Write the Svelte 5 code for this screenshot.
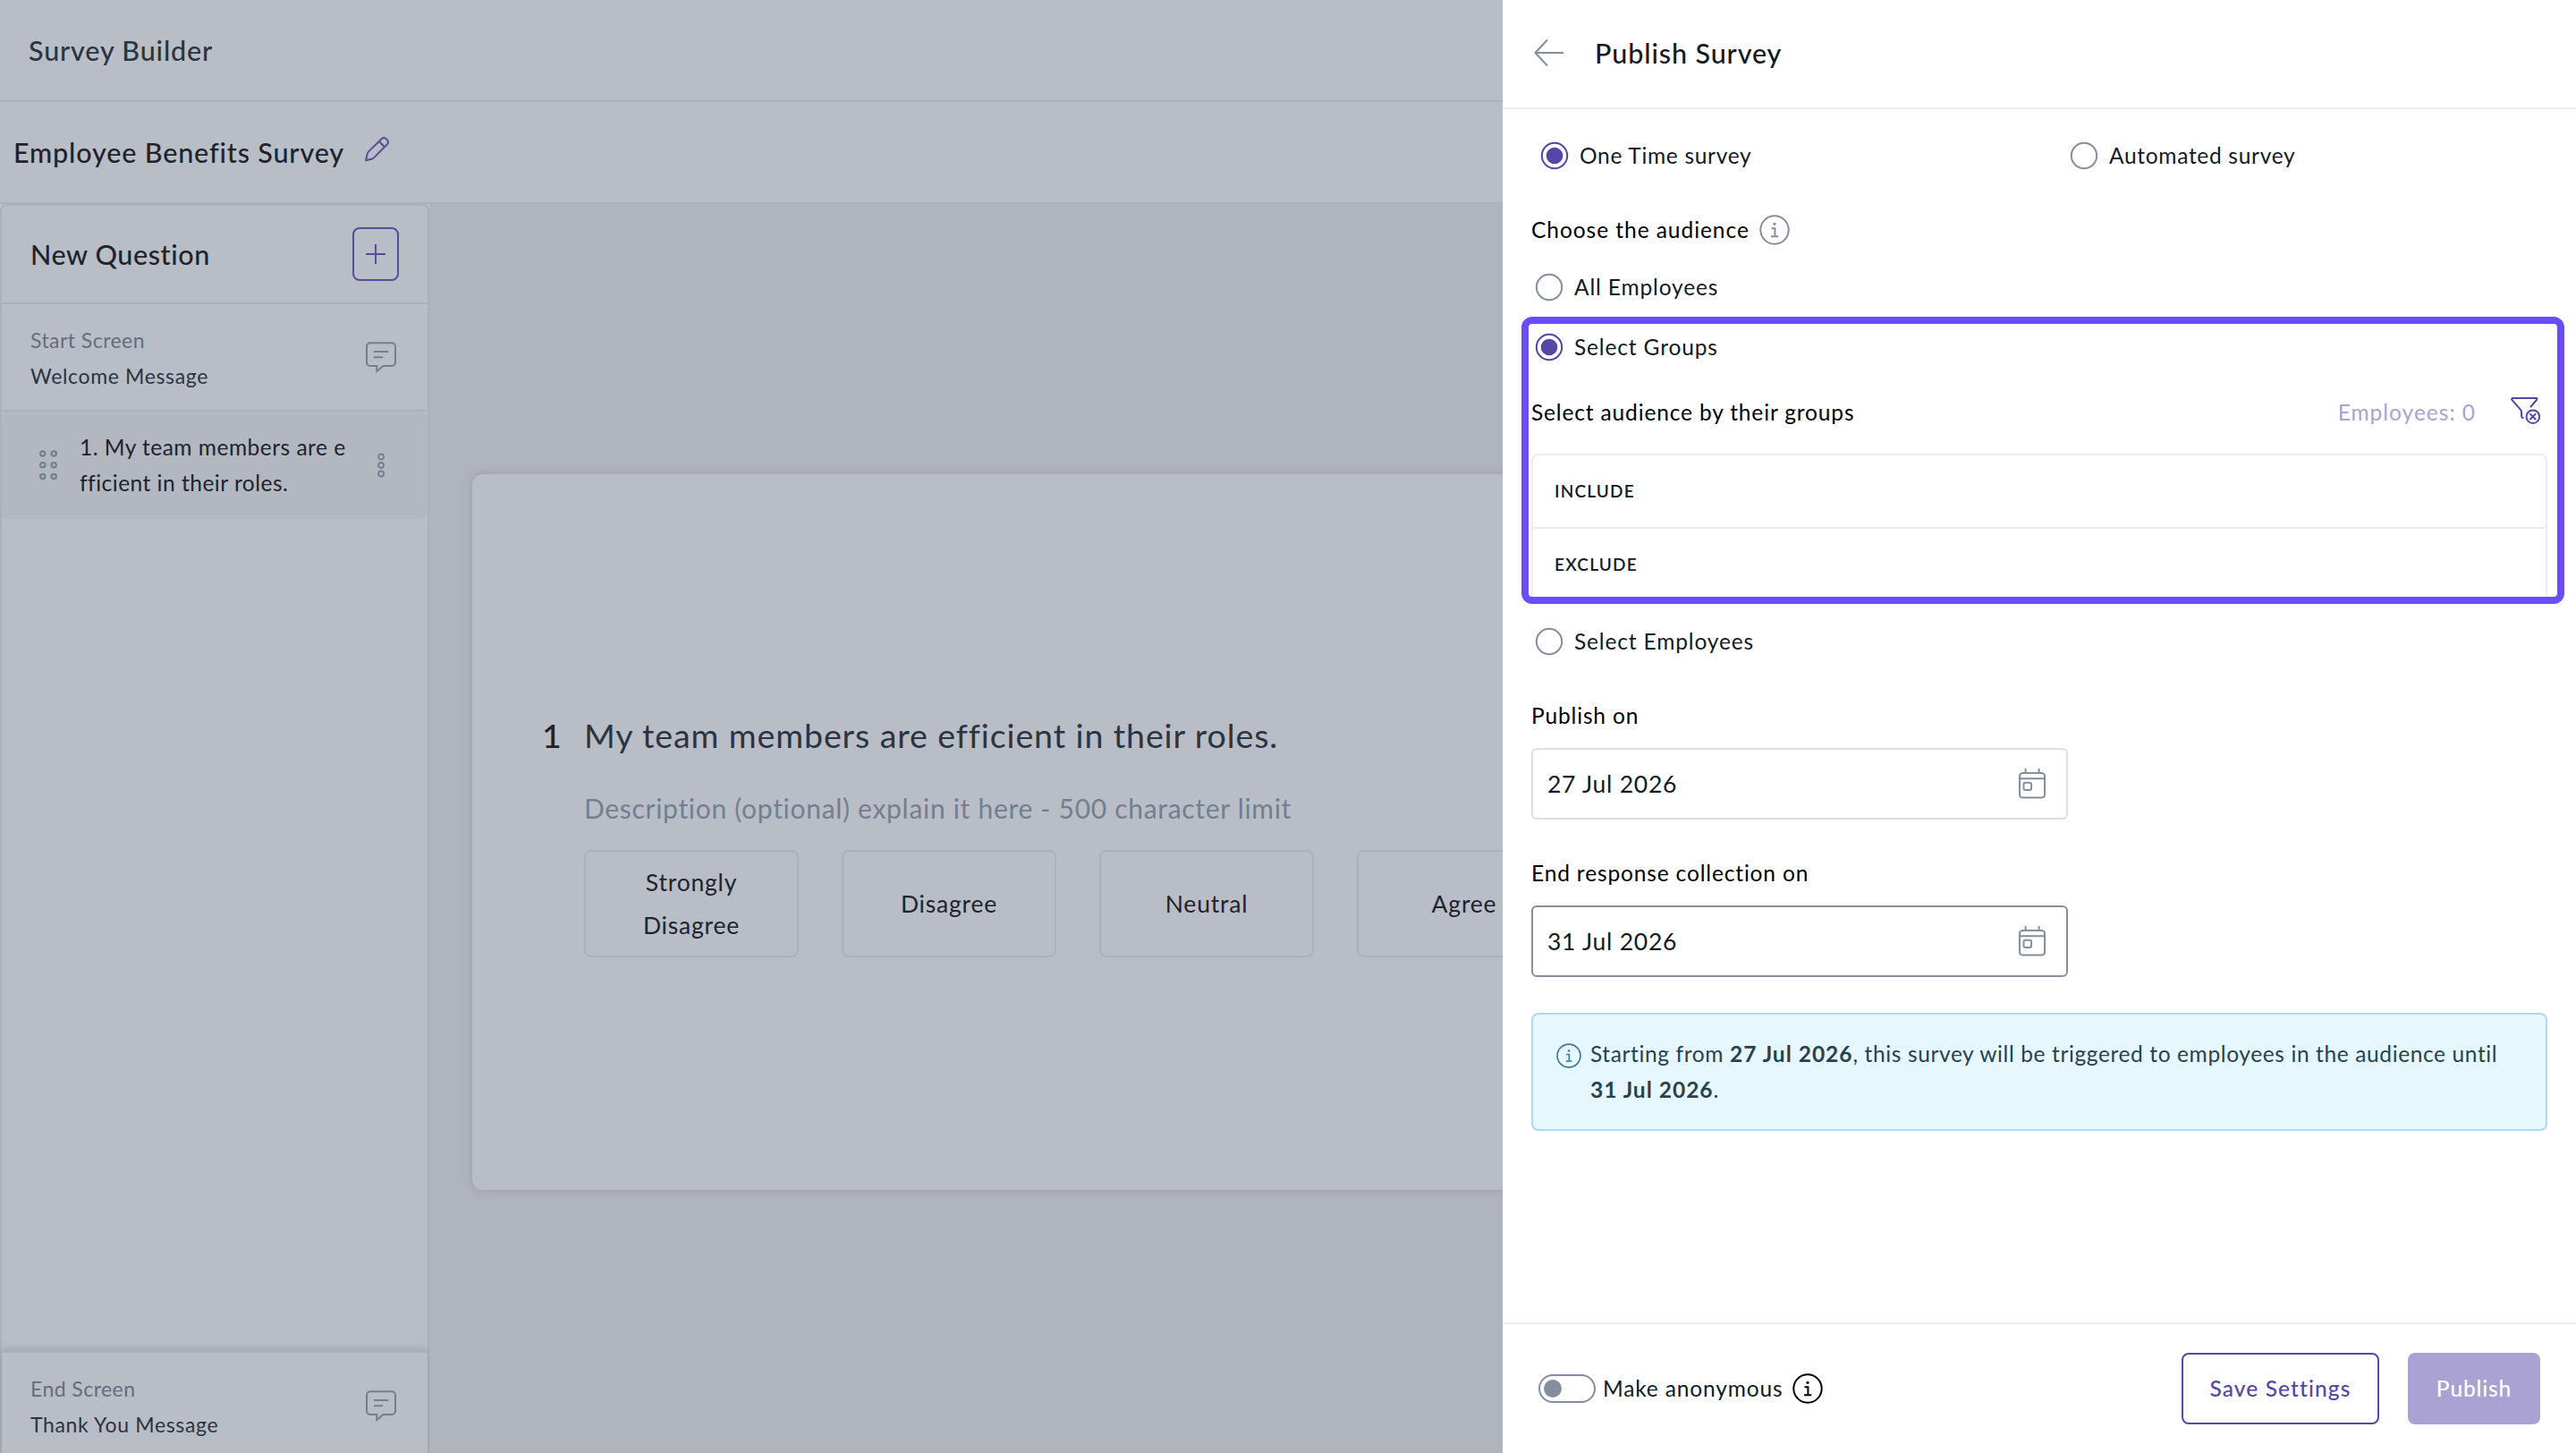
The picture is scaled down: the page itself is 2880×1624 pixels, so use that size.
<script>
	let surveyType = $state('one-time');
	let audience = $state('groups');
	let anonymous = $state(false);
	let publishOn = $state('27 Jul 2026');
	let endOn = $state('31 Jul 2026');

	const options = ['Strongly Disagree', 'Disagree', 'Neutral', 'Agree'];
	const dots = [4, 16.7, 29.5];
</script>

<svelte:head>
	<title>Survey Builder</title>
</svelte:head>

{#snippet radio(selected)}
	<svg class="radio" class:selected width="32" height="32" viewBox="0 0 32 32">
		<circle cx="16" cy="16" r="14.2" fill="none" stroke="currentColor" stroke-width="2" />
		{#if selected}
			<circle cx="16" cy="16" r="9.3" fill="currentColor" />
		{/if}
	</svg>
{/snippet}

{#snippet infoIcon(size)}
	<svg width={size} height={size} viewBox="0 0 34 34" fill="none" stroke="currentColor" stroke-width="2">
		<circle cx="17" cy="17" r="15.7" />
		<path d="M13.5 15.2H17.4V24.2M13 24.3H21.2" />
		<circle cx="17" cy="10.3" r="1.6" fill="currentColor" stroke="none" />
	</svg>
{/snippet}

{#snippet messageIcon()}
	<svg class="muted" width="34" height="35" viewBox="0 0 34 35" fill="none" stroke="currentColor" stroke-width="2" stroke-linecap="round">
		<path d="M5 1.2H29a4 4 0 0 1 4 4V23a4 4 0 0 1-4 4H19.5L12.3 33V27H5a4 4 0 0 1-4-4V5.2a4 4 0 0 1 4-4Z" />
		<path d="M9.7 10.9H24.3M9.7 17.2H18.3" />
	</svg>
{/snippet}

{#snippet calendarIcon()}
	<svg class="calendar" width="30" height="34" viewBox="0 0 30 34" fill="none" stroke="currentColor" stroke-width="2">
		<rect x="1" y="5" width="28" height="27.6" rx="3.5" />
		<path d="M1 11.3H29M7.6 0V5M22.6 0V5" />
		<rect x="5.5" y="15.7" width="8.6" height="8.2" rx="2" />
	</svg>
{/snippet}

<div class="app">
	<div class="builder">
		<header class="topbar">Survey Builder</header>
		<div class="title-bar">
			<span>Employee Benefits Survey</span>
			<svg class="pencil" width="28" height="28" viewBox="0 0 28 28" fill="none" stroke="currentColor" stroke-width="2" stroke-linejoin="round">
				<path d="M1 26.3L2.6 19.2Q3 17.6 4.2 16.4L18.6 2.2Q21.3-.3 24 2.6Q27.4 5.6 25 8.3L10.4 22.9Q9.2 24.2 7.6 24.7Z" />
				<path d="M15.8 5L22 11.2" />
			</svg>
		</div>

		<div class="workspace">
			<aside class="sidebar">
				<div class="new-question">
					<span>New Question</span>
					<button class="add" aria-label="Add question">
						<svg width="22" height="22" viewBox="0 0 22 22" stroke="currentColor" stroke-width="2">
							<path d="M11 0V22M0 11H22" />
						</svg>
					</button>
				</div>
				<div class="screen">
					<div class="screen-text">
						<div class="screen-label">Start Screen</div>
						<div class="screen-name">Welcome Message</div>
					</div>
					{@render messageIcon()}
				</div>
				<div class="question-item">
					<svg class="muted" width="22" height="34" viewBox="0 0 22 34" fill="none" stroke="currentColor" stroke-width="2.2">
						{#each dots as cy}
							<circle cx="4.7" {cy} r="2.7" />
							<circle cx="17.2" {cy} r="2.7" />
						{/each}
					</svg>
					<div class="question-text">1. My team members are e<br />fficient in their roles.</div>
					<svg class="muted" width="8" height="28" viewBox="0 0 8 28" fill="none" stroke="currentColor" stroke-width="1.8">
						<circle cx="4" cy="4.5" r="3" />
						<circle cx="4" cy="14" r="3" />
						<circle cx="4" cy="23.5" r="3" />
					</svg>
				</div>
				<div class="screen end">
					<div class="screen-text">
						<div class="screen-label">End Screen</div>
						<div class="screen-name">Thank You Message</div>
					</div>
					{@render messageIcon()}
				</div>
			</aside>

			<main class="canvas">
				<div class="card">
					<div class="number">1</div>
					<div class="question">
						<div class="question-title">My team members are efficient in their roles.</div>
						<div class="description">Description (optional) explain it here - 500 character limit</div>
						<div class="options">
							{#each options as option}
								<div class="option">{option}</div>
							{/each}
						</div>
					</div>
				</div>
			</main>
		</div>
	</div>

	<section class="panel">
		<header class="panel-header">
			<svg class="back" width="34" height="32" viewBox="0 0 34 32" fill="none" stroke="currentColor" stroke-width="2" stroke-linecap="round" stroke-linejoin="round">
				<path d="M32.3 16H1.5M14.5 2L1.5 16L14.5 30" />
			</svg>
			<span>Publish Survey</span>
		</header>

		<div class="panel-body">
			<div class="survey-type">
				<div class="choice">{@render radio(surveyType === 'one-time')}<span>One Time survey</span></div>
				<div class="choice">{@render radio(surveyType === 'automated')}<span>Automated survey</span></div>
			</div>

			<div class="audience-label">
				<span>Choose the audience</span>
				{@render infoIcon(34)}
			</div>
			<div class="choice all">{@render radio(audience === 'all')}<span>All Employees</span></div>
			<div class="choice groups">{@render radio(audience === 'groups')}<span>Select Groups</span></div>

			<div class="group-header">
				<span>Select audience by their groups</span>
				<span class="count">Employees: 0</span>
				<svg class="filter" width="34" height="34" viewBox="0 0 34 34" fill="none" stroke="currentColor" stroke-width="2" stroke-linecap="round" stroke-linejoin="round">
					<path d="M23.5 11.5L30 4Q31 2 29.5 2H3.2Q1.3 2.2 2.6 4.2L12 14.8Q13 16 13 17.5V21.5Q13 23.2 14.6 24" />
					<circle cx="25.8" cy="22.7" r="7.3" />
					<path d="M23 19.9L28.6 25.5M28.6 19.9L23 25.5" />
				</svg>
			</div>
			<div class="group-box">
				<div class="group-row">INCLUDE</div>
				<div class="group-row">EXCLUDE</div>
			</div>
			<div class="choice employees">{@render radio(audience === 'employees')}<span>Select Employees</span></div>

			<div class="field-label publish-label">Publish on</div>
			<div class="date-field">
				<span>{publishOn}</span>
				{@render calendarIcon()}
			</div>
			<div class="field-label end-label">End response collection on</div>
			<div class="date-field focused">
				<span>{endOn}</span>
				{@render calendarIcon()}
			</div>

			<div class="notice">
				<div class="notice-icon">{@render infoIcon(28)}</div>
				<p>Starting from <strong>{publishOn}</strong>, this survey will be triggered to employees in the audience until <strong>{endOn}</strong>.</p>
			</div>
		</div>

		<footer class="panel-footer">
			<button class="toggle" class:on={anonymous} aria-label="Make anonymous" onclick={() => (anonymous = !anonymous)}>
				<span class="knob"></span>
			</button>
			<span class="anonymous">Make anonymous</span>
			{@render infoIcon(34)}
			<button class="save">Save Settings</button>
			<button class="publish">Publish</button>
		</footer>

		<div class="highlight"></div>
	</section>
</div>

<style>
	:global(body) {
		margin: 0;
		overflow: hidden;
	}

	.app {
		display: flex;
		width: 2880px;
		height: 1624px;
		font-family: Lato, 'Liberation Sans', sans-serif;
		font-size: 24.5px;
		letter-spacing: 0.85px;
		line-height: 40px;
		color: #121a26;
		white-space: nowrap;
	}

	.app :global(*) {
		box-sizing: border-box;
	}

	svg {
		display: block;
		flex: none;
	}

	button {
		display: flex;
		align-items: center;
		justify-content: center;
		padding: 0;
		background: none;
		font: inherit;
		letter-spacing: inherit;
	}

	/* Builder, dimmed behind the panel */
	.builder {
		display: flex;
		flex-direction: column;
		width: 1680px;
		overflow: hidden;
		background: #b9bdc6;
		color: #1f232d;
	}

	.topbar,
	.title-bar {
		display: flex;
		align-items: center;
		height: 114px;
		border-bottom: 2px solid #acb0b9;
		font-size: 30.5px;
		font-weight: 500;
		letter-spacing: 0.85px;
	}

	.topbar {
		padding-left: 32px;
		color: #2b3442;
	}

	.title-bar {
		gap: 23px;
		padding-left: 15px;
	}

	.pencil {
		margin-bottom: 7px;
		color: #564f96;
	}

	.workspace {
		display: flex;
		flex: 1;
		min-height: 0;
	}

	.sidebar {
		display: flex;
		flex-direction: column;
		width: 480px;
		flex: none;
		border: 2px solid #acb0b9;
		border-bottom: none;
		border-radius: 8px 8px 0 0;
	}

	.new-question {
		display: flex;
		align-items: center;
		justify-content: space-between;
		height: 110px;
		padding: 0 32px 0 32px;
		border-bottom: 2px solid #acb0b9;
		font-size: 30.5px;
		font-weight: 500;
		letter-spacing: 0.6px;
	}

	.add {
		width: 52px;
		height: 60px;
		border: 2px solid #564f96;
		border-radius: 8px;
		color: #564f96;
	}

	.screen {
		display: flex;
		align-items: center;
		justify-content: space-between;
		height: 120px;
		padding: 0 35px 0 32px;
		border-bottom: 2px solid #acb0b9;
		font-size: 23px;
		letter-spacing: 0.65px;
	}

	.screen-text {
		padding-top: 2px;
	}

	.screen-label {
		color: #656d7d;
		letter-spacing: 0.45px;
	}

	.screen-name {
		color: #2b3442;
	}

	.muted {
		color: #757e8f;
	}

	.question-item {
		display: flex;
		align-items: center;
		height: 120px;
		padding: 0 48px 0 41px;
		border-radius: 8px;
		background: #b3b7c0;
		font-size: 24.5px;
		letter-spacing: 0.5px;
	}

	.question-text {
		flex: 1;
		padding-left: 24px;
	}

	.end {
		height: 114px;
		margin-top: auto;
		padding-top: 6px;
		border-top: 2px solid #acb0b9;
		border-bottom: none;
		background: #b9bdc6;
		box-shadow: 0 0 10px 1px #989ca8;
	}

	.canvas {
		flex: 1;
		min-width: 0;
		padding: 302px 0 0 48px;
		background: #b0b4bd;
	}

	.card {
		display: flex;
		width: 1400px;
		height: 800px;
		padding: 265px 0 0 78px;
		border-radius: 12px;
		background: #b9bdc6;
		box-shadow: 0 0 12px #989ca8;
	}

	.number,
	.question-title {
		font-size: 37.5px;
		line-height: 54px;
		letter-spacing: 0.9px;
	}

	.number {
		width: 47px;
		flex: none;
		font-weight: 500;
	}

	.question-title {
		color: #2b3442;
	}

	.description {
		margin-top: 34px;
		font-size: 30px;
		letter-spacing: 0.7px;
		color: #757e8f;
	}

	.options {
		display: flex;
		gap: 48px;
		margin-top: 27px;
	}

	.option {
		display: flex;
		align-items: center;
		justify-content: center;
		width: 240px;
		height: 120px;
		flex: none;
		padding: 0 40px;
		border: 2px solid #acb0b9;
		border-radius: 8px;
		font-size: 26.5px;
		line-height: 48px;
		letter-spacing: 0.8px;
		text-align: center;
		white-space: normal;
	}

	/* Publish panel */
	.panel {
		position: relative;
		display: flex;
		flex-direction: column;
		width: 1200px;
		background: #fff;
	}

	.panel-header {
		display: flex;
		align-items: center;
		gap: 34px;
		height: 122px;
		padding: 0 0 2px 35px;
		border-bottom: 2px solid #ececec;
		font-size: 30.5px;
		font-weight: 500;
		letter-spacing: 0.9px;
	}

	.back {
		color: #858e9e;
	}

	.panel-body {
		flex: 1;
		padding: 32px 32px 0;
	}

	.survey-type {
		display: grid;
		grid-template-columns: 592px 1fr;
		padding-left: 6px;
		letter-spacing: 0.7px;
	}

	.choice {
		display: flex;
		align-items: center;
		gap: 12px;
		height: 40px;
		padding-left: 4px;
	}

	.radio {
		color: #858e9e;
	}

	.radio.selected {
		color: #5546a8;
	}

	.audience-label {
		display: flex;
		align-items: center;
		gap: 11px;
		margin-top: 43px;
		color: #000;
		letter-spacing: 0.95px;
	}

	.audience-label svg {
		color: #858e9e;
	}

	.all {
		margin-top: 24px;
	}

	.groups {
		margin-top: 27px;
	}

	.group-header {
		display: flex;
		align-items: center;
		height: 40px;
		margin-top: 32px;
		padding-right: 8px;
		color: #000;
	}

	.group-header span {
		padding-top: 2px;
	}

	.count {
		margin-left: auto;
		color: #aaa2d3;
		letter-spacing: 1px;
	}

	.filter {
		margin-left: 38px;
		color: #5546a8;
	}

	.group-box {
		margin-top: 27px;
		border: 2px solid #ececec;
		border-radius: 8px;
	}

	.group-row {
		height: 80px;
		padding-left: 24px;
		font-size: 19px;
		font-weight: 600;
		line-height: 80px;
		letter-spacing: 1.2px;
	}

	.group-row + .group-row {
		height: 82px;
		border-top: 2px solid #ececec;
	}

	.employees {
		margin-top: 24px;
	}

	.field-label {
		color: #000;
	}

	.publish-label {
		margin-top: 43px;
	}

	.end-label {
		margin-top: 40px;
	}

	.date-field {
		display: flex;
		align-items: center;
		justify-content: space-between;
		width: 600px;
		height: 80px;
		margin-top: 16px;
		padding: 0 23px 0 16px;
		border: 2px solid #dddde3;
		border-radius: 6px;
		font-size: 26.5px;
		letter-spacing: 0.75px;
	}

	.date-field.focused {
		border-color: #858e9e;
	}

	.calendar {
		color: #858e9e;
	}

	.notice {
		display: flex;
		gap: 10px;
		margin-top: 40px;
		padding: 24px 26px;
		border: 2px solid #b0daeb;
		border-radius: 8px;
		background: #e6f7fe;
		color: #27424f;
		letter-spacing: 0.62px;
		white-space: normal;
	}

	.notice-icon {
		padding-top: 8px;
		color: #3f75a3;
	}

	.notice p {
		margin: 0;
	}

	.notice strong {
		font-weight: 700;
		letter-spacing: 1px;
		white-space: nowrap;
	}

	.panel-footer {
		display: flex;
		align-items: center;
		height: 146px;
		padding: 0 40px;
		border-top: 2px solid #ececec;
	}

	.toggle {
		justify-content: flex-start;
		width: 64px;
		height: 32px;
		padding: 0 4px;
		border: 2px solid #858e9e;
		border-radius: 16px;
	}

	.toggle.on {
		justify-content: flex-end;
	}

	.knob {
		width: 20px;
		height: 20px;
		border-radius: 50%;
		background: #858e9e;
	}

	.anonymous {
		margin: 0 11px 0 8px;
	}

	.panel-footer svg {
		color: #000;
	}

	.save,
	.publish {
		height: 80px;
		border-radius: 8px;
		font-weight: 500;
	}

	.save {
		width: 221px;
		margin-left: auto;
		border: 2px solid #5546a8;
		color: #5546a8;
		letter-spacing: 1.1px;
	}

	.publish {
		width: 148px;
		margin-left: 32px;
		border: none;
		background: #aaa2d3;
		color: #fff;
	}

	/* Callout frame drawn over the group selection */
	.highlight {
		position: absolute;
		top: 354px;
		left: 21px;
		width: 1166px;
		height: 321px;
		border: 8px solid #6a4df7;
		border-radius: 12px;
		pointer-events: none;
	}
</style>
